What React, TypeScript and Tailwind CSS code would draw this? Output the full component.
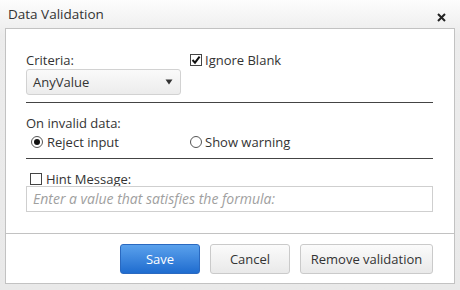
import React from "react";

const font = { fontFamily: '"Open Sans", "Noto Sans", sans-serif' };

function CheckBox({ checked }: { checked?: boolean }) {
  return (
    <span className="w-[12px] h-[12px] border border-[#444] bg-white flex items-center justify-center shrink-0">
      {checked && (
        <svg width="10" height="10" viewBox="0 0 10 10">
          <path d="M1.5 5 L4 7.6 L8.6 1.6" fill="none" stroke="#111" strokeWidth="2" />
        </svg>
      )}
    </span>
  );
}

function Radio({ checked }: { checked?: boolean }) {
  return (
    <span className="w-[12px] h-[12px] rounded-full border border-[#555] bg-white flex items-center justify-center shrink-0">
      {checked && <span className="w-[6px] h-[6px] rounded-full bg-[#111]" />}
    </span>
  );
}

export default function App() {
  return (
    <div
      className="w-[460px] h-[290px] bg-gradient-to-b from-[#fdfdfd] via-[#ececec] via-[12%] to-[#e9e9e9] flex flex-col px-[5px] pb-[6px] text-[13px] text-[#333]"
      style={font}
    >
      <div className="h-[28px] flex items-center justify-between pl-[3px] pr-[9px] shrink-0">
        <span className="text-[13.5px] text-[#333] leading-[18px] -mt-[1px]">Data Validation</span>
        <svg width="9" height="9" viewBox="0 0 9 9" className="mt-[6px]">
          <path d="M1 1 L8 8 M8 1 L1 8" stroke="#222" strokeWidth="2" />
        </svg>
      </div>
      <div className="flex-1 bg-white border border-[#c2c2c2] flex flex-col">
        <div className="flex-1 pt-[22px] pl-[20px] pr-[21px] flex flex-col">
          <div className="flex">
            <div className="w-[164px] flex flex-col">
              <div className="h-[18px] leading-[18px]">Criteria:</div>
              <div className="w-[155px] h-[26px] rounded-[3px] border border-[#d2d2d2] bg-gradient-to-b from-[#fafafa] to-[#ececec] flex items-center justify-between pl-[6px] pr-[7px]">
                <span className="leading-[18px]">AnyValue</span>
                <svg width="8" height="6" viewBox="0 0 8 6">
                  <path d="M0.5 0.5 L7.5 0.5 L4 5.5 Z" fill="#333" />
                </svg>
              </div>
            </div>
            <div className="h-[18px] flex items-center gap-[3px]">
              <CheckBox checked />
              <span className="leading-[18px]">Ignore Blank</span>
            </div>
          </div>
          <div className="mt-[7px] h-px bg-[#444]" />
          <div className="mt-[11px] h-[18px] leading-[18px]">On invalid data:</div>
          <div className="mt-[1px] h-[18px] flex items-center">
            <div className="w-[164px] flex items-center gap-[4px] pl-[5px]">
              <Radio checked />
              <span className="leading-[18px]">Reject input</span>
            </div>
            <div className="flex items-center gap-[3px]">
              <Radio />
              <span className="leading-[18px]">Show warning</span>
            </div>
          </div>
          <div className="mt-[7px] h-px bg-[#444]" />
          <div className="mt-[12px] h-[15px] flex items-center gap-[4px] pl-[4px]">
            <CheckBox />
            <span className="leading-[18px]">Hint Message:</span>
          </div>
          <div className="h-[26px] border border-[#cfcfcf] flex items-center pl-[6px]">
            <span className="italic text-[14px] text-[#a0a0a0] leading-[18px]">Enter a value that satisfies the formula:</span>
          </div>
        </div>
        <div className="h-[50px] border-t border-[#c2c2c2] flex justify-end items-start pt-[10px] pr-[21px] gap-[10px] shrink-0">
          <button className="w-[80px] h-[30px] rounded-[3px] border border-[#2a69c0] bg-gradient-to-b from-[#5aa1ec] to-[#1e6ccf] text-white leading-[18px]">
            Save
          </button>
          <button className="w-[80px] h-[30px] rounded-[3px] border border-[#cacaca] bg-gradient-to-b from-[#fbfbfb] to-[#e9e9e9] text-[#333] leading-[18px]">
            Cancel
          </button>
          <button className="w-[133px] h-[30px] rounded-[3px] border border-[#cacaca] bg-gradient-to-b from-[#fbfbfb] to-[#e9e9e9] text-[#333] leading-[18px]">
            Remove validation
          </button>
        </div>
      </div>
    </div>
  );
}
